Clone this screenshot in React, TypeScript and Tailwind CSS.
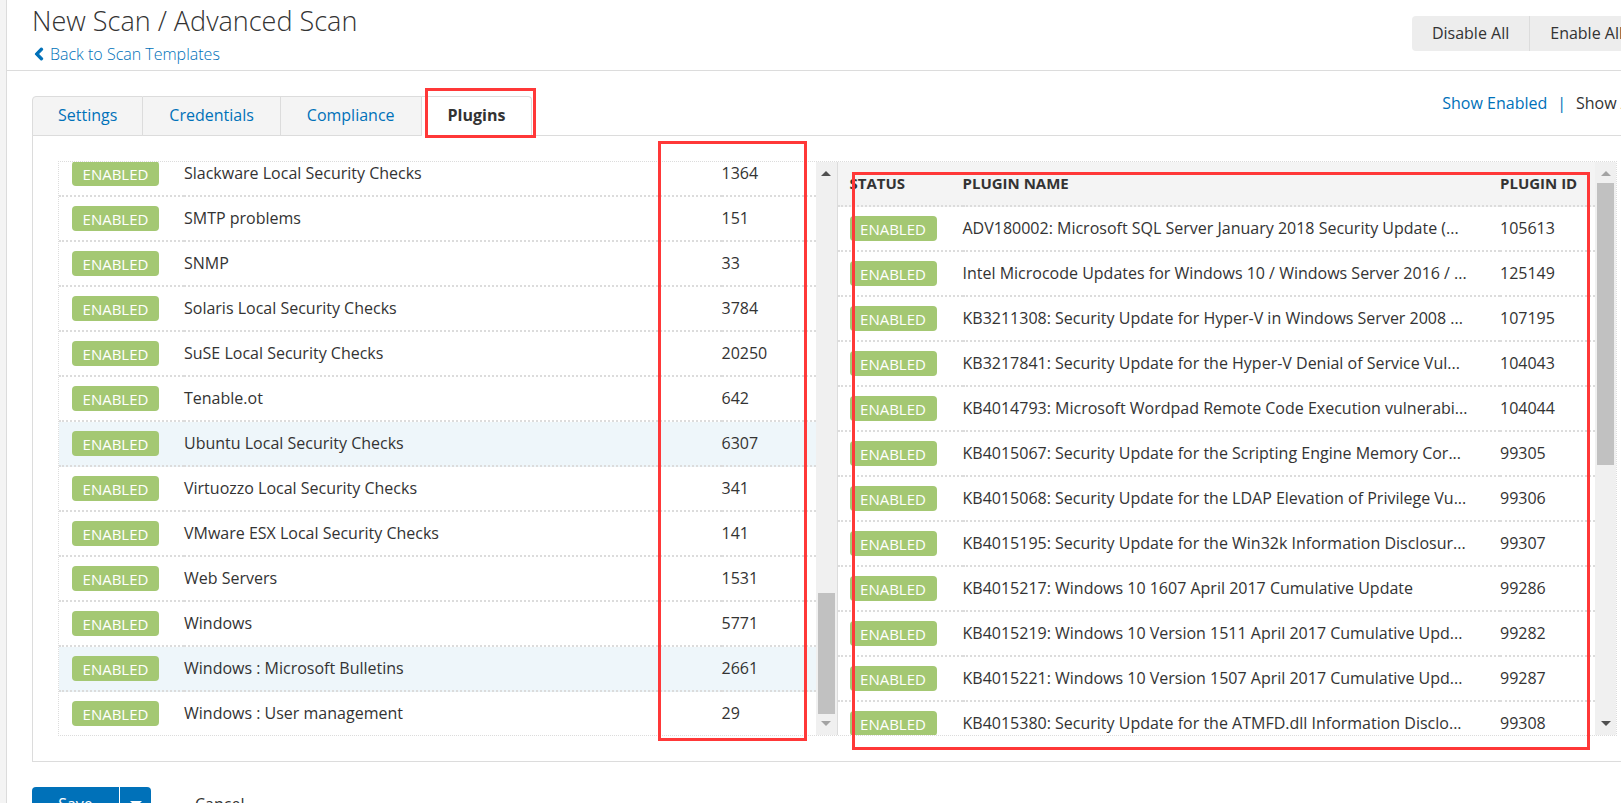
import { FaChevronLeft } from "react-icons/fa";

const families: { name: string; count: number; active?: boolean }[] = [
  { name: "Slackware Local Security Checks", count: 1364 },
  { name: "SMTP problems", count: 151 },
  { name: "SNMP", count: 33 },
  { name: "Solaris Local Security Checks", count: 3784 },
  { name: "SuSE Local Security Checks", count: 20250 },
  { name: "Tenable.ot", count: 642 },
  { name: "Ubuntu Local Security Checks", count: 6307, active: true },
  { name: "Virtuozzo Local Security Checks", count: 341 },
  { name: "VMware ESX Local Security Checks", count: 141 },
  { name: "Web Servers", count: 1531 },
  { name: "Windows", count: 5771 },
  { name: "Windows : Microsoft Bulletins", count: 2661, active: true },
  { name: "Windows : User management", count: 29 },
];

const plugins: [string, number][] = [
  ["ADV180002: Microsoft SQL Server January 2018 Security Update (...", 105613],
  ["Intel Microcode Updates for Windows 10 / Windows Server 2016 / ...", 125149],
  ["KB3211308: Security Update for Hyper-V in Windows Server 2008 ...", 107195],
  ["KB3217841: Security Update for the Hyper-V Denial of Service Vul...", 104043],
  ["KB4014793: Microsoft Wordpad Remote Code Execution vulnerabi...", 104044],
  ["KB4015067: Security Update for the Scripting Engine Memory Cor...", 99305],
  ["KB4015068: Security Update for the LDAP Elevation of Privilege Vu...", 99306],
  ["KB4015195: Security Update for the Win32k Information Disclosur...", 99307],
  ["KB4015217: Windows 10 1607 April 2017 Cumulative Update", 99286],
  ["KB4015219: Windows 10 Version 1511 April 2017 Cumulative Upd...", 99282],
  ["KB4015221: Windows 10 Version 1507 April 2017 Cumulative Upd...", 99287],
  ["KB4015380: Security Update for the ATMFD.dll Information Disclo...", 99308],
];

const tabs = ["Settings", "Credentials", "Compliance"];

function StatusBadge() {
  return (
    <button type="button" className="block h-[25px] w-[87px] rounded bg-[#a4c873] text-center text-[15px] leading-6 text-white">
      ENABLED
    </button>
  );
}

function Arrow({ up, dim }: { up?: boolean; dim?: boolean }) {
  return (
    <svg width="10" height="5" viewBox="0 0 10 5" className={dim ? "text-[#a3a3a3]" : "text-[#505050]"} aria-hidden="true">
      <path d={up ? "M5 0 L10 5 H0 Z" : "M0 0 H10 L5 5 Z"} fill="currentColor" />
    </svg>
  );
}

function Scrollbar({ atEnd }: { atEnd?: boolean }) {
  return (
    <div className="flex h-full w-[21px] shrink-0 flex-col items-center bg-[#f0f0f0]">
      <div className="flex h-[21px] shrink-0 items-center pt-0.5">
        <Arrow up dim={!atEnd} />
      </div>
      <div className={atEnd ? "flex w-[17px] grow flex-col justify-end" : "flex w-[17px] grow flex-col"}>
        <div className={atEnd ? "h-[121px] bg-[#c1c1c1]" : "h-[282px] bg-[#c1c1c1]"} />
      </div>
      <div className="flex h-[21px] shrink-0 items-center pb-0.5">
        <Arrow dim={atEnd} />
      </div>
    </div>
  );
}

export default function App() {
  return (
    <div className="flex h-screen overflow-hidden bg-white font-['Open_Sans','Noto_Sans',sans-serif] text-base text-[#333]">
      <div className="w-[7px] shrink-0 border-r border-[#dcdcdc] bg-[#f4f4f4]" />
      <main className="w-[calc(100%+40px)] shrink-0">
        <header className="flex h-[71px] items-start justify-between border-b border-[#dcdcdc] px-[25px]">
          <div>
            <h1 className="text-[27px] leading-[42px] font-light">New Scan / Advanced Scan</h1>
            <a href="#templates" className="flex items-center gap-1 leading-6 font-light text-[#0071b9]">
              <FaChevronLeft className="size-[14px] stroke-[#0071b9] stroke-[40px]" />
              Back to Scan Templates
            </a>
          </div>
          <div className="mt-4 flex h-[35px] overflow-hidden rounded">
            <button type="button" className="border-r border-[#dcdcdc] bg-[#ededed] px-5 pb-0.5">Disable All</button>
            <button type="button" className="bg-[#ededed] px-5 pb-0.5">Enable All</button>
          </div>
        </header>

        <div className="px-[25px] pt-[25px]">
          <div className="flex items-start justify-between">
            <nav className="relative z-10 -mb-px flex">
              {tabs.map((tab) => (
                <button
                  key={tab}
                  type="button"
                  className="h-10 border-y border-r border-[#dcdcdc] bg-[#f4f4f4] px-[25px] pb-0.5 text-[#0071b9] first:rounded-tl first:border-l not-first:px-[26px]"
                >
                  {tab}
                </button>
              ))}
              <button type="button" className="relative h-10 rounded-tr border-t border-r border-[#dcdcdc] bg-white px-[26px] pb-1 font-bold">
                Plugins
                <span className="pointer-events-none absolute -top-[9px] -right-[5px] -bottom-[2px] left-[3px] border-3 border-[#ff3838]" />
              </button>
            </nav>
            <div className="flex gap-2.5 pr-1 leading-[14px]">
              <a href="#enabled" className="text-[#0071b9]">Show Enabled</a>
              <span className="text-[#0071b9]">|</span>
              <span>Show All</span>
            </div>
          </div>

          <section className="border border-[#dcdcdc] p-[25px]">
            <div className="relative border border-dotted border-[#dcdcdc]">
              <div className="flex h-[573px]">
                <div className="flex w-1/2 border-r border-[#dcdcdc]">
                  <div className="flex grow flex-col justify-end overflow-hidden">
                    <table className="w-full table-fixed border-separate border-spacing-0">
                      <colgroup>
                        <col className="w-[125px]" />
                        <col />
                        <col className="w-[94px]" />
                      </colgroup>
                      <tbody>
                        {families.map((f, i) => {
                          const line = i < families.length - 1 ? "border-b-2 border-dotted border-[#dcdcdc]" : "";
                          return (
                            <tr key={f.name} className={f.active ? "bg-[#eef6fa]" : "bg-white"}>
                              <td className={`py-[9px] pl-[13px] ${line}`}><StatusBadge /></td>
                              <td className={`pb-0.5 ${line}`}>{f.name}</td>
                              <td className={`pb-0.5 ${line}`}>{f.count}</td>
                            </tr>
                          );
                        })}
                      </tbody>
                    </table>
                  </div>
                  <Scrollbar atEnd />
                </div>

                <div className="flex w-1/2">
                  <div className="grow overflow-hidden">
                    <table className="w-full table-fixed border-separate border-spacing-0">
                      <colgroup>
                        <col className="w-[125px]" />
                        <col />
                        <col className="w-[95px]" />
                      </colgroup>
                      <thead>
                        <tr className="h-[45px] bg-[#f4f4f4] text-left text-[15px]">
                          <th className="border-b-2 border-dotted border-[#dcdcdc] pl-3">STATUS</th>
                          <th className="border-b-2 border-dotted border-[#dcdcdc]">PLUGIN NAME</th>
                          <th className="border-b-2 border-dotted border-[#dcdcdc]">PLUGIN ID</th>
                        </tr>
                      </thead>
                      <tbody>
                        {plugins.map(([name, id]) => (
                          <tr key={id}>
                            <td className="border-b-2 border-dotted border-[#dcdcdc] py-[9px] pl-3"><StatusBadge /></td>
                            <td className="border-b-2 border-dotted border-[#dcdcdc] pb-0.5 whitespace-nowrap">{name}</td>
                            <td className="border-b-2 border-dotted border-[#dcdcdc] pb-0.5">{id}</td>
                          </tr>
                        ))}
                      </tbody>
                    </table>
                  </div>
                  <Scrollbar />
                </div>
              </div>
              <div className="pointer-events-none absolute -top-[21px] -bottom-[6px] left-[599px] w-[149px] border-3 border-[#ff3838]" />
              <div className="pointer-events-none absolute top-[10px] right-[26px] -bottom-[15px] left-[793px] border-3 border-[#ff3838]" />
            </div>
          </section>

          <footer className="mt-[25px] flex h-[35px] items-stretch">
            <button type="button" className="w-[87px] rounded-l bg-[#0071b9] pb-0.5 text-white">Save</button>
            <button type="button" aria-label="More save options" className="ml-px flex w-[31px] items-center justify-center rounded-r bg-[#0071b9] pb-0.5 text-white">
              <svg width="12" height="6" viewBox="0 0 12 6" aria-hidden="true">
                <path d="M0 0 H12 L6 6 Z" fill="currentColor" />
              </svg>
            </button>
            <button type="button" className="ml-11 pb-0.5">Cancel</button>
          </footer>
        </div>
      </main>
    </div>
  );
}
